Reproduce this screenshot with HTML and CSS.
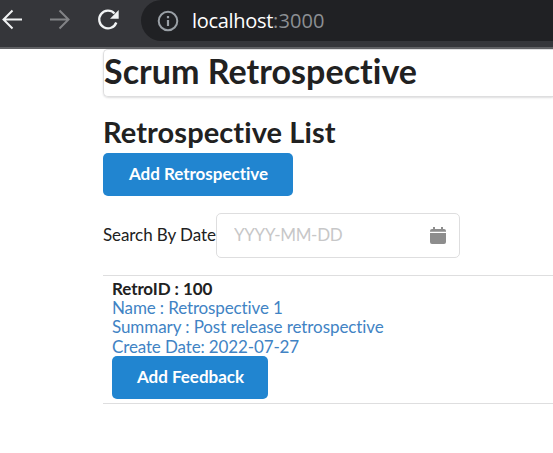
FILE: index.html
```html
<!DOCTYPE html>
<html lang="en">
<head>
<meta charset="utf-8">
<title>Scrum Retrospective</title>
<link rel="stylesheet" href="styles.css">
</head>
<body>
<header class="browser-bar">
  <svg class="nav-icons" width="140" height="40" viewBox="0 0 140 40" fill="none" stroke-width="2">
    <path d="M22 19.500H3.500M12.500 10.500L3.500 19.500l9 9" stroke="#f1f3f4"/>
    <path d="M50 19.500h18.500M59.500 10.500l9 9-9 9" stroke="#828386"/>
    <path d="M114.500 13.500A8.800 8.800 0 1 0 116.300 22.500" stroke="#f1f3f4" stroke-width="2.300"/>
    <path d="M118.700 10v8.700H110z" fill="#f1f3f4"/>
  </svg>
  <div class="address">
    <svg class="info" width="22" height="22" viewBox="0 0 22 22" fill="none" stroke="#9aa0a6" stroke-width="2">
      <circle cx="11" cy="11" r="9.300"/>
      <path d="M11 10v6M11 6v2.200" stroke-width="2.200"/>
    </svg>
    <span class="host">localhost</span><span class="port">:3000</span>
  </div>
</header>
<main class="page">
  <div class="banner"><h1>Scrum Retrospective</h1></div>
  <h2>Retrospective List</h2>
  <button class="button add-retro">Add Retrospective</button>
  <div class="search">
    <label for="date">Search By Date</label>
    <div class="field">
      <input id="date" type="text" placeholder="YYYY-MM-DD">
      <svg class="calendar" width="16" height="18" viewBox="0 0 16 18" fill="#8d8d8d">
        <path d="M0 4.800V4a2 2 0 0 1 2-2h1V0h2v2h6V0h2v2h1a2 2 0 0 1 2 2v.8zM0 6h16V15a2 2 0 0 1-2 2H2a2 2 0 0 1-2-2z"/>
      </svg>
    </div>
  </div>
  <section class="retro">
    <div class="retro-id">RetroID : 100</div>
    <div class="line name">Name : Retrospective 1</div>
    <div class="line summary">Summary : Post release retrospective</div>
    <div class="line created">Create Date: 2022-07-27</div>
    <button class="button add-feedback">Add Feedback</button>
  </section>
</main>
</body>
</html>
```
FILE: styles.css
```css
* { box-sizing: border-box; }
body {
  margin: 0;
  height: 453px;
  overflow: hidden;
  background: #fff;
  color: #212121;
  font: 17px/19.5px Lato, "Liberation Sans", sans-serif;
  font-variant-ligatures: none;
}
.browser-bar {
  display: flex;
  height: 49px;
  background: #35363a;
  border-bottom: 2px solid #606164;
}
.nav-icons { flex: none; margin-right: 1px; }
.address {
  display: flex;
  align-items: center;
  flex: 1;
  height: 41px;
  padding-left: 16px;
  border-radius: 21px 0 0 21px;
  background: #202124;
  font: 20px/41px "Open Sans", "Noto Sans", sans-serif;
}
.info { margin-right: 13px; }
.host { color: #fff; letter-spacing: -0.3px; }
.port { color: #8c8f93; letter-spacing: 0.1px; }
.page { padding-left: 103px; }
.banner {
  height: 48px;
  border: 1px solid #dededf;
  border-right: 0;
  border-radius: 5px 0 0 5px;
  box-shadow: 0 1px 2px rgba(34, 36, 38, .15);
}
h1, h2 { margin: 0; font-weight: 700; white-space: nowrap; }
h1 { font-size: 34px; line-height: 42px; letter-spacing: 0.04px; }
h2 { margin-top: 17px; font-size: 29px; line-height: 36px; letter-spacing: 0.09px; }
.button {
  display: block;
  height: 43px;
  padding: 0 0 1px 1px;
  border: 0;
  border-radius: 5px;
  background: #2185d0;
  color: #fff;
  font: 700 17px/42px Lato, sans-serif;
  letter-spacing: -0.02px;
  white-space: nowrap;
}
.add-retro { width: 190px; margin-top: 3px; }
.search {
  display: flex;
  align-items: center;
  height: 45px;
  margin-top: 17px;
}
.search label {
  width: 113px;
  padding-bottom: 2px;
  letter-spacing: -0.08px;
  white-space: nowrap;
}
.field {
  display: flex;
  align-items: center;
  width: 244px;
  height: 45px;
  padding: 0 13px 0 17px;
  border: 1px solid #dededf;
  border-radius: 5px;
}
input {
  flex: 1;
  min-width: 0;
  padding: 0 0 2px;
  border: 0;
  outline: 0;
  background: none;
  font: inherit;
  letter-spacing: -0.3px;
}
input::placeholder { color: #c7c7c8; opacity: 1; }
.retro {
  height: 129px;
  margin-top: 17px;
  padding: 3px 0 0 9px;
  border: solid #dededf;
  border-width: 1px 0;
}
.retro-id { font-weight: 700; line-height: 19px; letter-spacing: -0.1px; }
.line { color: #4183c4; line-height: 19px; letter-spacing: -0.13px; }
.summary { line-height: 20px; letter-spacing: -0.08px; }
.add-feedback { width: 156px; }
```
